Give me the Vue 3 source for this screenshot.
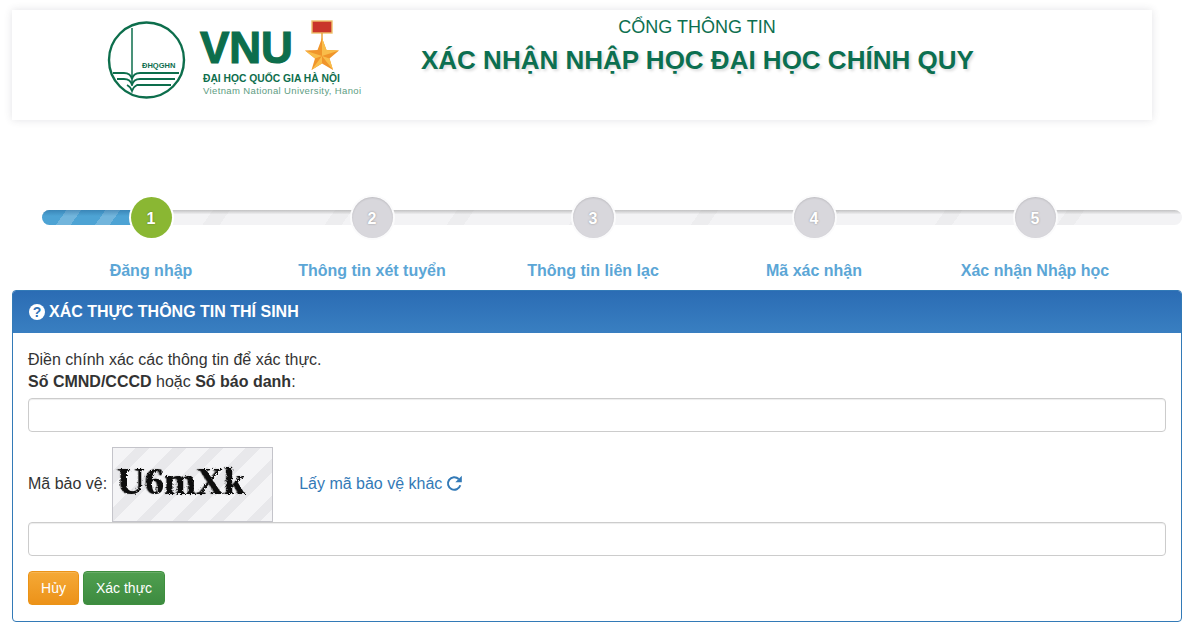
<script setup>
const steps = [
  { n: 1, label: 'Đăng nhập', active: true },
  { n: 2, label: 'Thông tin xét tuyển' },
  { n: 3, label: 'Thông tin liên lạc' },
  { n: 4, label: 'Mã xác nhận' },
  { n: 5, label: 'Xác nhận Nhập học' }
]
</script>

<template>
  <div class="page">
    <svg class="defs" width="0" height="0">
      <filter id="rough" x="-5%" y="-10%" width="110%" height="120%">
        <feTurbulence type="fractalNoise" baseFrequency="0.55" numOctaves="2" seed="4" result="n" />
        <feDisplacementMap in="SourceGraphic" in2="n" scale="3.500" />
      </filter>
    </svg>
    <header class="banner">
      <div class="brand">
        <svg class="seal" width="80" height="80" viewBox="0 0 80 80">
          <circle cx="39.500" cy="40" r="37.500" fill="none" stroke="#0d6e4c" stroke-width="2.400" />
          <path d="M25 8V66" fill="none" stroke="#0d6e4c" stroke-width="1.500" />
          <path d="M6 53H17C21 53 24 55 25 59C26 55 29 53 33 53H72" fill="none" stroke="#0d6e4c" stroke-width="1.800" />
          <path d="M10 59H17C21 59 24 61 25 65C26 61 29 59 33 59H68" fill="none" stroke="#0d6e4c" stroke-width="1.800" />
          <path d="M20 65C22 66 24 68 25 71C26 68 28 66 30 65H64" fill="none" stroke="#0d6e4c" stroke-width="1.800" />
          <text x="35" y="47.500" class="seal-text">ĐHQGHN</text>
        </svg>
        <div class="wordmark">
          <div class="vnu-row">
            <span class="vnu">VNU</span>
            <svg class="medal" width="34" height="50" viewBox="0 0 34 50">
              <rect x="5" y="1" width="20" height="12" fill="#c9352b" stroke="#eec06a" stroke-width="1.400" />
              <path d="M15 13V20" stroke="#e8a33c" stroke-width="1.500" />
              <path d="M15 18L19.500 30L32 30.500L22.500 38.500L26 50L15 43.500L4.500 50L8 38.500L-2 30.500L10.500 30Z" fill="#f0952a" />
              <path d="M15 18L15 36L32 30.500L19.500 30ZM15 36L26 50L22.500 38.500ZM15 36L4.500 50L15 43.500ZM15 36L-2 30.500L8 38.500Z" fill="#f9bd4a" />
            </svg>
          </div>
          <div class="vn-name">ĐẠI HỌC QUỐC GIA HÀ NỘI</div>
          <div class="en-name">Vietnam National University, Hanoi</div>
        </div>
      </div>
      <div class="titles">
        <div class="title-small">CỔNG THÔNG TIN</div>
        <div class="title-main">XÁC NHẬN NHẬP HỌC ĐẠI HỌC CHÍNH QUY</div>
      </div>
    </header>

    <section class="stepper">
      <div class="track"><div class="track-fill"></div></div>
      <div class="steps">
        <div v-for="s in steps" :key="s.n" class="step">
          <div class="dot" :class="{ active: s.active }">{{ s.n }}</div>
          <div class="step-label">{{ s.label }}</div>
        </div>
      </div>
    </section>

    <section class="panel">
      <div class="panel-head">
        <svg class="q-icon" width="16" height="16" viewBox="0 0 16 16">
          <circle cx="8" cy="8" r="8" fill="#fff" />
          <text x="8" y="13" class="q-mark">?</text>
        </svg>
        <span>XÁC THỰC THÔNG TIN THÍ SINH</span>
      </div>
      <div class="panel-body">
        <p class="intro">Điền chính xác các thông tin để xác thực.<br /><b>Số CMND/CCCD</b> hoặc <b>Số báo danh</b>:</p>
        <input class="field" type="text" />
        <div class="captcha-row">
          <span class="row-text">Mã bảo vệ:</span>
          <div class="captcha"><span class="captcha-code">U6mXk</span></div>
          <a class="reload row-text">
            Lấy mã bảo vệ khác
            <svg width="17" height="17" viewBox="0 0 17 17">
              <path d="M14.300 10.300A6.300 6.300 0 1 1 12.700 4" fill="none" stroke="#337ab7" stroke-width="2" />
              <path d="M15.800 0.800V7.300H9.300Z" fill="#337ab7" />
            </svg>
          </a>
        </div>
        <input class="field" type="text" />
        <div class="actions">
          <button class="btn cancel">Hủy</button>
          <button class="btn confirm">Xác thực</button>
        </div>
      </div>
    </section>
  </div>
</template>

<style scoped>
.page {
  width: 1194px;
  height: 634px;
  box-sizing: border-box;
  padding: 10px 12px 0;
  font-family: "Liberation Sans", Arial, sans-serif;
  color: #333;
  overflow: hidden;
}
.defs {
  position: absolute;
}
.banner {
  width: 1140px;
  height: 110px;
  box-sizing: border-box;
  display: flex;
  padding: 10px 0 0 95px;
  background: #fff;
  box-shadow: 0 0 8px rgba(60, 60, 80, 0.14);
}
.brand {
  display: flex;
  gap: 13px;
  width: 314px;
}
.seal-text {
  font-size: 7.500px;
  font-weight: 700;
  fill: #0d6e4c;
  font-family: "Liberation Sans", sans-serif;
}
.wordmark {
  width: 170px;
  color: #0d6e4c;
}
.vnu-row {
  display: flex;
  height: 50px;
  gap: 14px;
  align-items: flex-start;
}
.vnu {
  font-size: 44px;
  line-height: 44px;
  padding-top: 6px;
  font-weight: 700;
  -webkit-text-stroke: 1.200px #0d6e4c;
}
.medal {
  overflow: visible;
}
.vn-name {
  margin: 3px 0 0 3px;
  font-size: 10.300px;
  line-height: 12px;
  font-weight: 700;
  white-space: nowrap;
}
.en-name {
  margin-left: 3px;
  font-size: 9.500px;
  line-height: 12px;
  letter-spacing: 0.37px;
  color: #5e9d83;
  white-space: nowrap;
}
.titles {
  width: 552px;
  text-align: center;
  color: #0c6f50;
}
.title-small {
  margin-top: -3px;
  font-size: 18px;
  line-height: 20px;
}
.title-main {
  margin-top: 8px;
  font-size: 26px;
  line-height: 30px;
  font-weight: 700;
  white-space: nowrap;
  text-shadow: 2px 2px 3px rgba(0, 0, 0, 0.14);
}
.stepper {
  position: relative;
  margin-top: 77px;
  height: 93px;
}
.track {
  position: absolute;
  left: 30px;
  top: 13px;
  width: 1140px;
  height: 15px;
  border-radius: 8px;
  overflow: hidden;
  background:
    linear-gradient(to bottom, rgba(120, 120, 120, 0.4), rgba(255, 255, 255, 0) 30%),
    repeating-linear-gradient(125deg, #f3f3f5 0 40px, #ededef 40px 54px, #f3f3f5 54px 100px);
}
.track-fill {
  width: 100px;
  height: 100%;
  background:
    linear-gradient(to bottom, rgba(30, 90, 140, 0.4), rgba(255, 255, 255, 0) 40%),
    repeating-linear-gradient(125deg, #4da3d4 0 20px, #72b5dc 20px 32px);
}
.steps {
  position: relative;
  display: grid;
  grid-template-columns: repeat(5, 221px);
  margin-left: 28.500px;
}
.step {
  display: flex;
  flex-direction: column;
  align-items: center;
}
.dot {
  width: 41px;
  height: 41px;
  border-radius: 50%;
  background: #d8d7dc;
  color: #fff;
  font-size: 16px;
  font-weight: 700;
  line-height: 43px;
  text-align: center;
  text-shadow: 0 0 2px rgba(0, 0, 0, 0.35);
  box-shadow: 0 0 0 2px #fbfbfc, inset 0 1px 2px rgba(0, 0, 0, 0.12);
}
.dot.active {
  background: #8ab733;
  box-shadow: 0 0 0 2px #fff;
}
.step-label {
  margin-top: 23px;
  font-size: 16px;
  line-height: 20px;
  font-weight: 700;
  color: #5ba6d6;
  white-space: nowrap;
}
.panel {
  width: 1170px;
  height: 332px;
  box-sizing: border-box;
  border: 1px solid #337ab7;
  border-radius: 4px;
  overflow: hidden;
}
.panel-head {
  height: 42px;
  display: flex;
  align-items: center;
  gap: 4px;
  padding-left: 16px;
  background: linear-gradient(to bottom, #2b6cb4, #397fc1);
  color: #fff;
  font-size: 16px;
  font-weight: 700;
}
.q-mark {
  font-size: 14px;
  font-weight: 700;
  fill: #2f72b7;
  text-anchor: middle;
  font-family: "Liberation Sans", sans-serif;
}
.panel-body {
  padding: 16px 15px 0;
  font-size: 16px;
}
.intro {
  margin: 0 0 5px;
  line-height: 22px;
}
.field {
  display: block;
  width: 1138px;
  height: 34px;
  box-sizing: border-box;
  border: 1px solid #ccc;
  border-radius: 4px;
  background: #fff;
  box-shadow: inset 0 1px 1px rgba(0, 0, 0, 0.075);
}
.captcha-row {
  display: flex;
  align-items: center;
  height: 75px;
  margin-top: 15px;
}
.row-text {
  margin-bottom: 2px;
}
.captcha {
  width: 161px;
  height: 75px;
  box-sizing: border-box;
  margin-left: 5px;
  border: 1px solid #c4c4ca;
  padding: 12px 0 0 4px;
  background: repeating-linear-gradient(135deg, #f4f4f6 0 16px, #e8e8eb 16px 26px);
}
.captcha-code {
  display: block;
  font-family: "Liberation Serif", serif;
  font-size: 38.500px;
  font-weight: 700;
  line-height: 42px;
  color: #111;
  text-shadow: -1px 0 1px #555;
  filter: url(#rough);
}
.reload {
  display: flex;
  align-items: center;
  gap: 4px;
  margin-left: 26px;
  color: #337ab7;
}
.actions {
  display: flex;
  gap: 4px;
  margin-top: 15px;
}
.btn {
  height: 34px;
  border-radius: 4px;
  color: #fff;
  font: 14px "Liberation Sans", Arial, sans-serif;
  padding: 0;
  white-space: nowrap;
  box-shadow: inset 0 1px 0 rgba(255, 255, 255, 0.15);
}
.cancel {
  width: 51px;
  border: 1px solid #eb9316;
  background: linear-gradient(to bottom, #f5a936, #ec9219);
}
.confirm {
  width: 82px;
  border: 1px solid #3e8f3e;
  background: linear-gradient(to bottom, #4f9f4f, #3d8b40);
}
</style>
